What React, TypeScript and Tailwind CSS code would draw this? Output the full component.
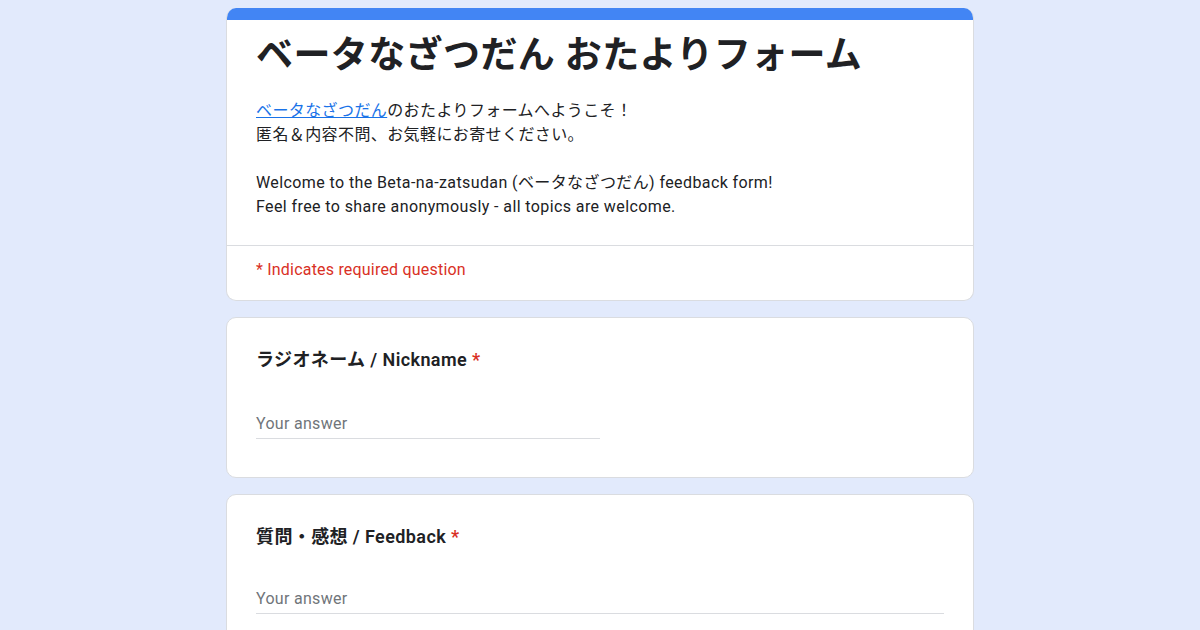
import React from "react";

const font = { fontFamily: 'Roboto, "Noto Sans CJK JP", sans-serif' };

function Question({ title, lineWidth, gap }: { title: string; lineWidth: string; gap: string }) {
  return (
    <div className="rounded-[10px] border border-[#dadce0] bg-white px-[29px] pt-[30px] pb-[38px]">
      <div className="text-[18px] font-semibold leading-[24px] tracking-[0.4px] text-[#202124]">
        {title} <span className="text-[#d93025]">*</span>
      </div>
      <div className={`${gap} ${lineWidth} border-b border-[#dadce0] pb-[2px]`}>
        <div className="text-[16px] leading-[24px] tracking-[0.3px] text-[#70757a]">Your answer</div>
      </div>
    </div>
  );
}

export default function App() {
  return (
    <div className="min-h-[630px] h-[630px] overflow-hidden bg-[#e2eafc]" style={font}>
      <div className="mx-auto flex w-[748px] flex-col gap-[16px] pt-[8px]">
        <div className="overflow-hidden rounded-[10px] border border-t-0 border-[#dadce0] bg-white">
          <div className="h-[12px] bg-[#4285f4]" />
          <div className="px-[29px] pt-[14px] pb-[26px]">
            <h1 className="text-[37px] font-bold leading-[44px] tracking-[0.4px] text-[#202124]">
              ベータなざつだん おたよりフォーム
            </h1>
            <div className="mt-[21px] text-[16px] leading-[24px] tracking-[0.4px] text-[#202124]">
              <div>
                <span className="text-[#1a73e8] underline">ベータなざつだん</span>
                のおたよりフォームへようこそ！
              </div>
              <div>匿名＆内容不問、お気軽にお寄せください。</div>
              <div className="h-[24px]" />
              <div>Welcome to the Beta-na-zatsudan (ベータなざつだん) feedback form!</div>
              <div>Feel free to share anonymously - all topics are welcome.</div>
            </div>
          </div>
          <div className="border-t border-[#dadce0] px-[29px] pt-[12px] pb-[18px]">
            <div className="text-[16px] leading-[24px] tracking-[0.2px] text-[#d93025]">* Indicates required question</div>
          </div>
        </div>
        <Question title="ラジオネーム / Nickname" lineWidth="w-[344px]" gap="mt-[40px]" />
        <Question title="質問・感想 / Feedback" lineWidth="w-full" gap="mt-[38px]" />
      </div>
    </div>
  );
}
